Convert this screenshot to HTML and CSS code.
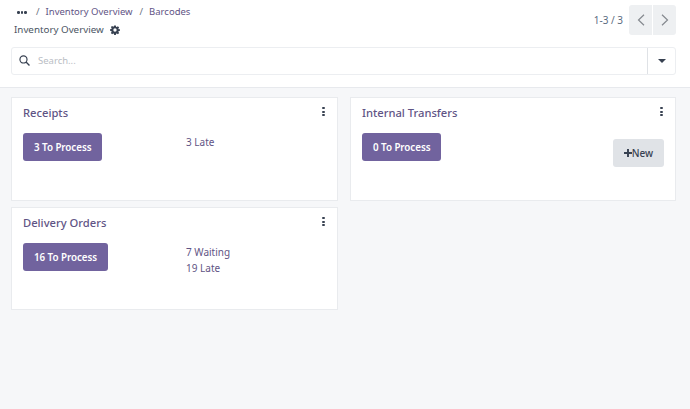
FILE: index.html
```html
<!DOCTYPE html>
<html lang="en">
<head>
<meta charset="utf-8">
<title>Inventory Overview</title>
<link rel="stylesheet" href="styles.css">
</head>
<body>
<header class="panel">
  <div class="panel-top">
    <div class="titles">
      <nav class="crumbs">
        <span class="dots"><i></i><i></i><i></i></span>
        <span class="sep">/</span>
        <a class="crumb">Inventory Overview</a>
        <span class="sep">/</span>
        <a class="crumb">Barcodes</a>
      </nav>
      <div class="current">
        <span>Inventory Overview</span>
        <svg class="gear" viewBox="0 0 24 24" width="10" height="10"><path fill="#374151" fill-rule="evenodd" d="M10 1h4l.6 3.100 1.700.7L19 3l2.900 2.900-1.800 2.700.7 1.700L24 10v4l-3.200.6-.7 1.700 1.800 2.700L19 21.900l-2.700-1.800-1.700.7L14 24h-4l-.6-3.200-1.700-.7L5 21.900 2.100 19l1.800-2.700-.7-1.700L0 14v-4l3.200-.6.7-1.700L2.100 5 5 2.100l2.700 1.800 1.700-.7zM12 8a4 4 0 1 0 0 8 4 4 0 0 0 0-8z"/></svg>
      </div>
    </div>
    <div class="pager">
      <span class="count">1-3 / 3</span>
      <div class="pager-btns">
        <button class="pager-btn"><svg viewBox="0 0 8 12" width="8" height="12"><path d="M7 .7 1.500 6 7 11.300" fill="none" stroke="#85898f" stroke-width="1.200"/></svg></button>
        <button class="pager-btn"><svg viewBox="0 0 8 12" width="8" height="12"><path d="M1 .7 6.500 6 1 11.300" fill="none" stroke="#85898f" stroke-width="1.200"/></svg></button>
      </div>
    </div>
  </div>
  <div class="search">
    <svg class="search-icon" viewBox="0 0 14 14" width="11" height="11"><circle cx="5.700" cy="5.700" r="4.500" fill="none" stroke="#374151" stroke-width="1.500"/><path d="M9 9l4.300 4.300" stroke="#374151" stroke-width="1.700"/></svg>
    <span class="placeholder">Search...</span>
    <span class="search-toggle"><span class="caret"></span></span>
  </div>
</header>
<main class="board">
  <section class="card">
    <div class="card-head"><h2>Receipts</h2><span class="kebab"><i></i><i></i><i></i></span></div>
    <div class="card-body">
      <button class="primary">3 To Process</button>
      <div class="stats"><a>3 Late</a></div>
    </div>
  </section>
  <section class="card">
    <div class="card-head"><h2>Internal Transfers</h2><span class="kebab"><i></i><i></i><i></i></span></div>
    <div class="card-body">
      <button class="primary">0 To Process</button>
      <button class="secondary"><svg viewBox="0 0 10 10" width="8" height="8"><path d="M3.800 0h2.400v3.800H10v2.400H6.200V10H3.800V6.200H0V3.800h3.800z" fill="#374151"/></svg>New</button>
    </div>
  </section>
  <section class="card">
    <div class="card-head"><h2>Delivery Orders</h2><span class="kebab"><i></i><i></i><i></i></span></div>
    <div class="card-body">
      <button class="primary">16 To Process</button>
      <div class="stats"><a>7 Waiting</a><a>19 Late</a></div>
    </div>
  </section>
</main>
</body>
</html>
```
FILE: styles.css
```css
* { box-sizing: border-box; }
html, body { height: 100%; }
body {
  margin: 0;
  background: #f6f7f9;
  color: #374151;
  font-family: "Noto Sans", "Open Sans", sans-serif;
  font-size: 9.500px;
  overflow: hidden;
}
.panel {
  height: 88px;
  background: #fff;
  border-bottom: 1px solid #e7e9ed;
  padding: 4px 11px 0;
}
.panel-top {
  display: flex;
  justify-content: space-between;
  height: 43px;
}
.crumbs {
  display: flex;
  align-items: center;
  height: 15px;
  padding-left: 6px;
  gap: 6px;
}
.crumb { color: #5f5485; font-size: 9.500px; }
.sep { color: #6b7280; font-size: 9.500px; margin-left: 1px; }
.dots { display: flex; gap: 1px; width: 12px; }
.dots i { width: 2.500px; height: 2.500px; background: #374151; border-radius: 50%; margin-top: 2px; }
.current {
  display: flex;
  align-items: center;
  gap: 6px;
  margin-top: 2px;
  margin-left: 3px;
  height: 17px;
  font-size: 9.800px;
  color: #4b5563;
}
.pager {
  display: flex;
  align-items: flex-start;
  gap: 6px;
  margin-right: 3px;
}
.count { color: #5b6b80; font-size: 10px; margin-top: 9px; }
.pager-btns { display: flex; gap: 1px; }
.pager-btn {
  width: 23px;
  height: 30px;
  margin: 1px 0 0;
  padding: 0;
  border: 0;
  background: #eef0f2;
  display: flex;
  align-items: center;
  justify-content: center;
}
.pager-btn:first-child { border-radius: 3px 0 0 3px; }
.pager-btn:last-child { border-radius: 0 3px 3px 0; }
.search {
  display: flex;
  align-items: center;
  height: 27.500px;
  width: 665px;
  border: 1px solid #eceef1;
  border-radius: 3px;
  padding-left: 7px;
}
.search-icon { flex: none; }
.placeholder { color: #b9bdc4; font-size: 9.500px; margin-left: 8px; flex: 1; }
.search-toggle {
  width: 28px;
  height: 100%;
  border-left: 1px solid #dfe2e6;
  display: flex;
  align-items: center;
  justify-content: center;
}
.caret {
  width: 0;
  height: 0;
  border: 4px solid transparent;
  border-top-color: #374151;
  border-bottom: 0;
}
.board {
  display: grid;
  grid-template-columns: 327px 326px;
  grid-template-rows: 104px 103px;
  gap: 6px 12px;
  padding: 9px 0 0 11px;
}
.card {
  background: #fff;
  border: 1px solid #e9ebee;
  padding: 0 11px;
}
.card-head {
  display: flex;
  justify-content: space-between;
  height: 35px;
}
.card-head h2 {
  margin: 6px 0 0;
  font-size: 11.200px;
  line-height: 17px;
  font-weight: 500;
  color: #5f5485;
}
.kebab { display: flex; flex-direction: column; gap: 1.500px; margin: 9px 1px 0 0; }
.kebab i { width: 3px; height: 2px; background: #374151; border-radius: 1px; }
.card-body { position: relative; display: flex; }
.primary {
  height: 28px;
  margin: 0;
  padding: 0 11px;
  border: 0;
  border-radius: 3px;
  background: #71639e;
  color: #fff;
  font: 600 9.800px "Noto Sans", "Open Sans", sans-serif;
  letter-spacing: -0.050px;
}
.stats {
  position: absolute;
  left: 163px;
  display: flex;
  flex-direction: column;
  color: #5f5485;
  font-size: 10px;
  line-height: 15.500px;
  top: 2px;
}
.secondary {
  position: absolute;
  right: 0;
  top: 6px;
  height: 28px;
  width: 51px;
  padding: 0;
  border: 0;
  border-radius: 3px;
  background: #e0e3e7;
  color: #374151;
  font: 500 10px "Noto Sans", "Open Sans", sans-serif;
  display: flex;
  align-items: center;
  justify-content: center;
}
```
